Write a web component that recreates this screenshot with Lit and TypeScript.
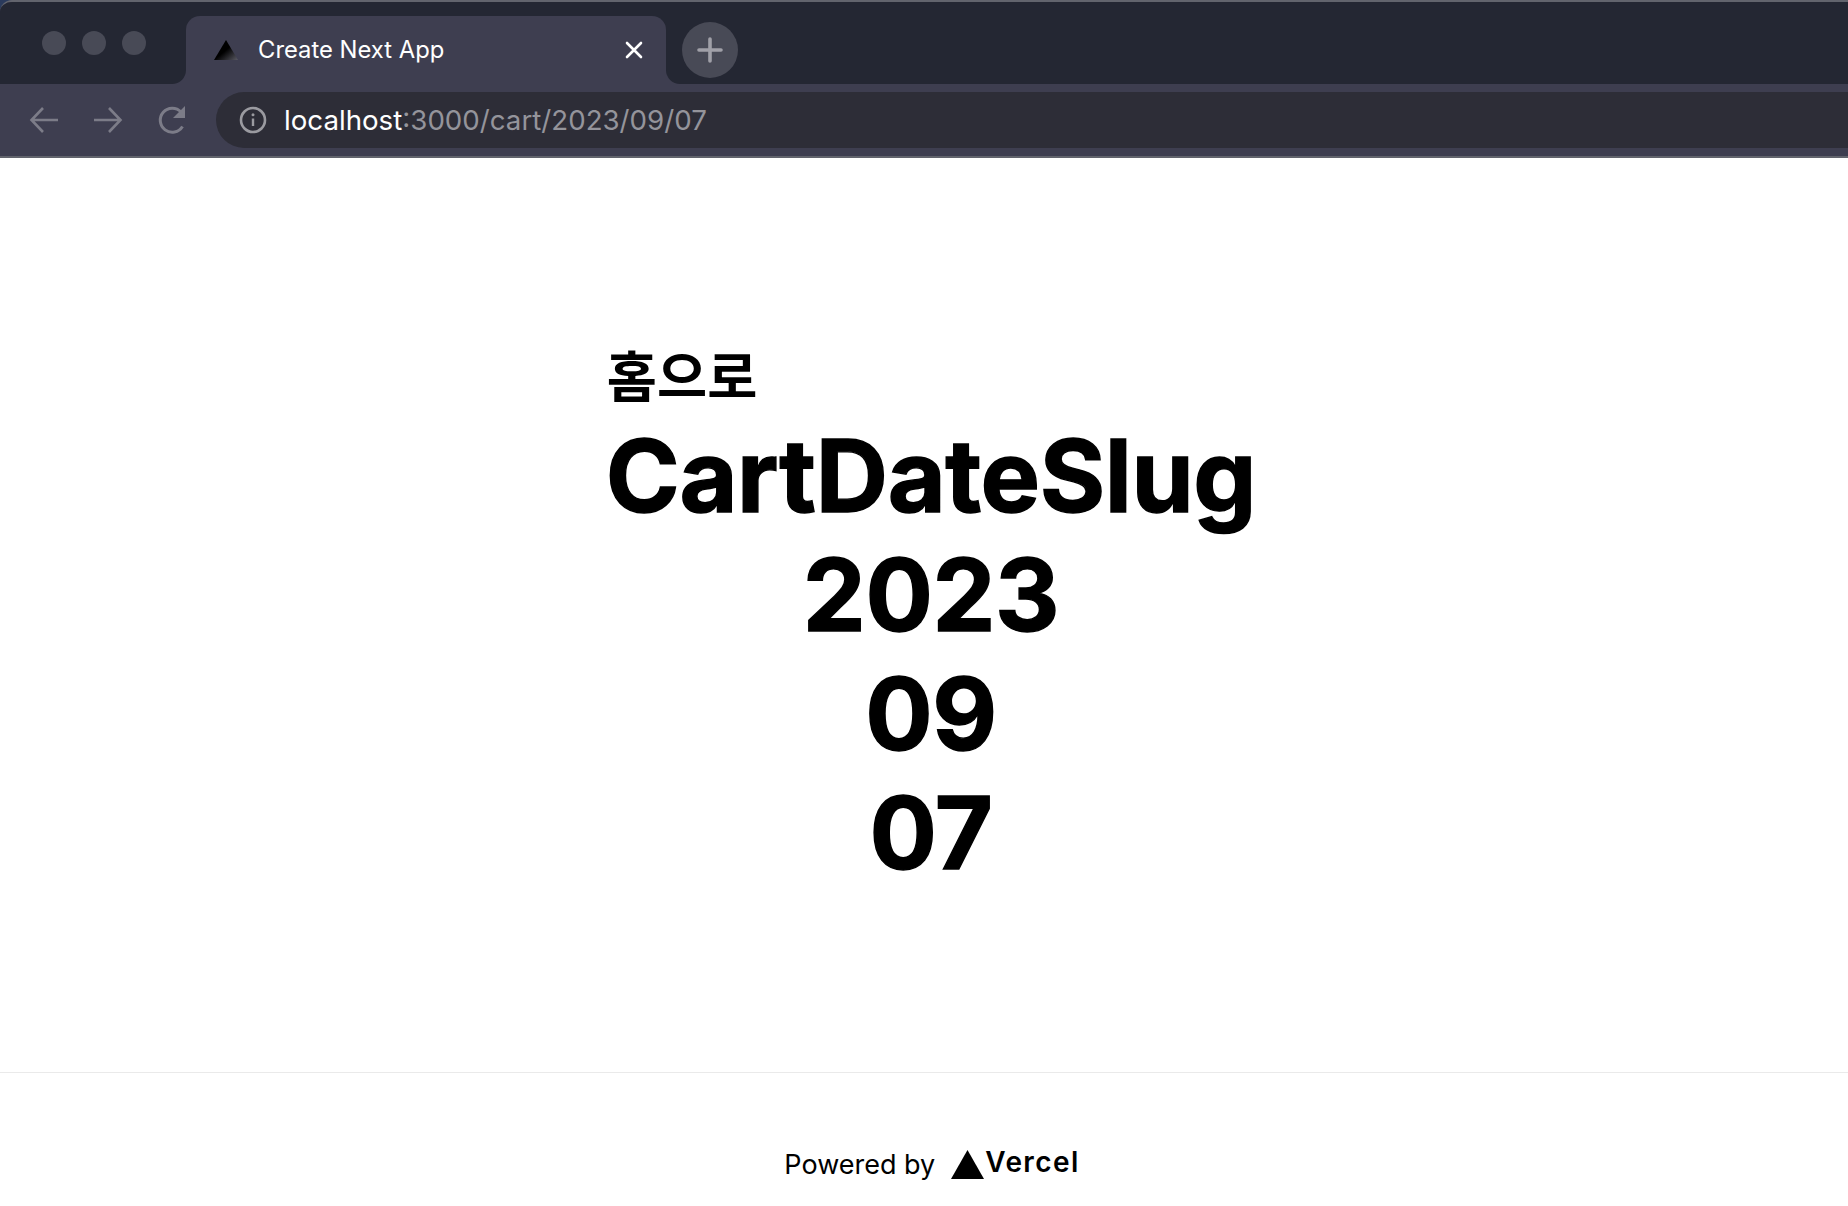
import { LitElement, html, css } from "lit";
import { customElement } from "lit/decorators.js";

@customElement("app-root")
export class AppRoot extends LitElement {
  static styles = css`
    :host { display: flex; flex-direction: column; height: 1206px; overflow: hidden; background: #fff; font-family: Inter, "Noto Sans CJK KR", sans-serif; color: #000; }
    .chrome { flex: none; height: 158px; background: #2a3a5c; display: flex; flex-direction: column; }
    .window { flex: 1; display: flex; flex-direction: column; border-top: 2px solid #62646d; border-bottom: 2px solid #62646d; border-top-left-radius: 12px; background: #3e3e50; overflow: hidden; box-sizing: border-box; }
    .tabs { height: 82px; flex: none; display: flex; background: #3e3e50; }
    .lights { width: 186px; flex: none; box-sizing: border-box; background: #242733; border-bottom-right-radius: 14px; display: flex; gap: 16px; padding: 29px 0 0 42px; }
    .light { width: 24px; height: 24px; border-radius: 50%; background: #484a56; }
    .tabwrap { flex: none; background: #242733; padding-top: 14px; }
    .tab { width: 480px; box-sizing: border-box; background: #3e3e50; border-radius: 14px 14px 0 0; display: flex; align-items: center; padding: 0 22px 0 28px; color: #fff; font-size: 23.8px; height: 68px; }
    .fav { width: 24px; height: 20px; margin-right: 20px; flex: none; }
    .title { flex: 1; white-space: nowrap; position: relative; top: -1px; }
    .close { width: 20px; height: 20px; flex: none; }
    .rest { flex: 1; background: #242733; border-bottom-left-radius: 14px; padding: 20px 0 0 16px; }
    .plus { width: 56px; height: 56px; border-radius: 50%; background: #484a56; display: flex; align-items: center; justify-content: center; }
    .plus svg { width: 26px; height: 26px; }
    .toolbar { flex: 1; display: flex; align-items: center; background: #3e3e50; padding-left: 28px; }
    .nav { width: 32px; height: 32px; flex: none; margin-right: 32px; }
    .nav.reload { margin-right: 27px; margin-left: 1px; }
    .addr { flex: 1; height: 56px; box-sizing: border-box; background: #2d2d37; border-radius: 28px 0 0 28px; display: flex; align-items: center; padding-left: 23px; font-size: 27.7px; color: #94949b; white-space: nowrap; }
    .addr svg { width: 28px; height: 28px; margin-right: 17px; flex: none; }
    .host { color: #fff; }
    main { flex: 1; display: flex; align-items: center; justify-content: center; min-height: 0; padding: 0 0 2px 14px; }
    .stack { display: flex; flex-direction: column; align-items: center; }
    .link { align-self: flex-start; font-size: 54.5px; font-weight: 700; line-height: 74px; margin: 0 0 5px 1px; font-family: "Noto Sans CJK KR", sans-serif; }
    h1 { margin: 0; font-size: 100px; font-weight: 700; line-height: 119px; letter-spacing: -0.4px; text-align: center; -webkit-text-stroke: 1.4px #000; }
    footer { flex: none; height: 134px; box-sizing: border-box; border-top: 1px solid #eaeaea; display: flex; align-items: center; justify-content: center; font-size: 27px; gap: 16px; padding: 50px 0 0 16px; }
    .logo { display: flex; align-items: center; }
    .logo svg { width: 33px; height: 29px; margin-right: 1px; }
    .brand { font-size: 28px; font-weight: 600; letter-spacing: 1.4px; position: relative; top: -3px; }
  `;

  render() {
    return html`
      <div class="chrome">
        <div class="window">
          <div class="tabs">
            <div class="lights"><span class="light"></span><span class="light"></span><span class="light"></span></div>
            <div class="tabwrap">
              <div class="tab">
                <svg class="fav" viewBox="0 0 24 20">
                  <defs><linearGradient id="fg" x1="0.5" y1="0.5" x2="1" y2="1"><stop offset="0" stop-color="#000"/><stop offset="1" stop-color="#5a5a64"/></linearGradient></defs>
                  <path d="M12 0 24 20H0Z" fill="url(#fg)"/>
                </svg>
                <span class="title">Create Next App</span>
                <svg class="close" viewBox="0 0 20 20"><path d="M3 3 17 17M17 3 3 17" stroke="#fff" stroke-width="2.6" stroke-linecap="round"/></svg>
              </div>
            </div>
            <div class="rest">
              <div class="plus"><svg viewBox="0 0 26 26"><path d="M13 2V24M2 13H24" stroke="#a0a0a8" stroke-width="3.6" stroke-linecap="round"/></svg></div>
            </div>
          </div>
          <div class="toolbar">
            <svg class="nav" viewBox="0 0 32 32" fill="none" stroke="#7c7c88" stroke-width="2.6"><path d="M30 16H4M15 4 3.5 16 15 28"/></svg>
            <svg class="nav" viewBox="0 0 32 32" fill="none" stroke="#7c7c88" stroke-width="2.6"><path d="M2 16H28M17 4 28.5 16 17 28"/></svg>
            <svg class="nav reload" viewBox="0 0 32 32" fill="none" stroke="#7c7c88" stroke-width="3"><path d="M25.5 22.5A12 12 0 1 1 24 8"/><path d="M28 2V14H16Z" fill="#7c7c88" stroke="none"/></svg>
            <div class="addr">
              <svg viewBox="0 0 28 28" fill="none"><circle cx="14" cy="14" r="12" stroke="#9a9aa0" stroke-width="2.6"/><path d="M14 12.5V20" stroke="#9a9aa0" stroke-width="2.4"/><circle cx="14" cy="8.8" r="1.5" fill="#9a9aa0"/></svg>
              <span class="host">localhost</span>:3000/cart/2023/09/07
            </div>
          </div>
        </div>
      </div>
      <main>
        <div class="stack">
          <a class="link">홈으로</a>
          <h1>CartDateSlug</h1>
          <h1>2023</h1>
          <h1>09</h1>
          <h1>07</h1>
        </div>
      </main>
      <footer>
        <span>Powered by</span>
        <span class="logo">
          <svg viewBox="0 0 33 29"><path d="M16.5 0 33 29H0Z" fill="#000"/></svg>
          <span class="brand">Vercel</span>
        </span>
      </footer>
    `;
  }
}
